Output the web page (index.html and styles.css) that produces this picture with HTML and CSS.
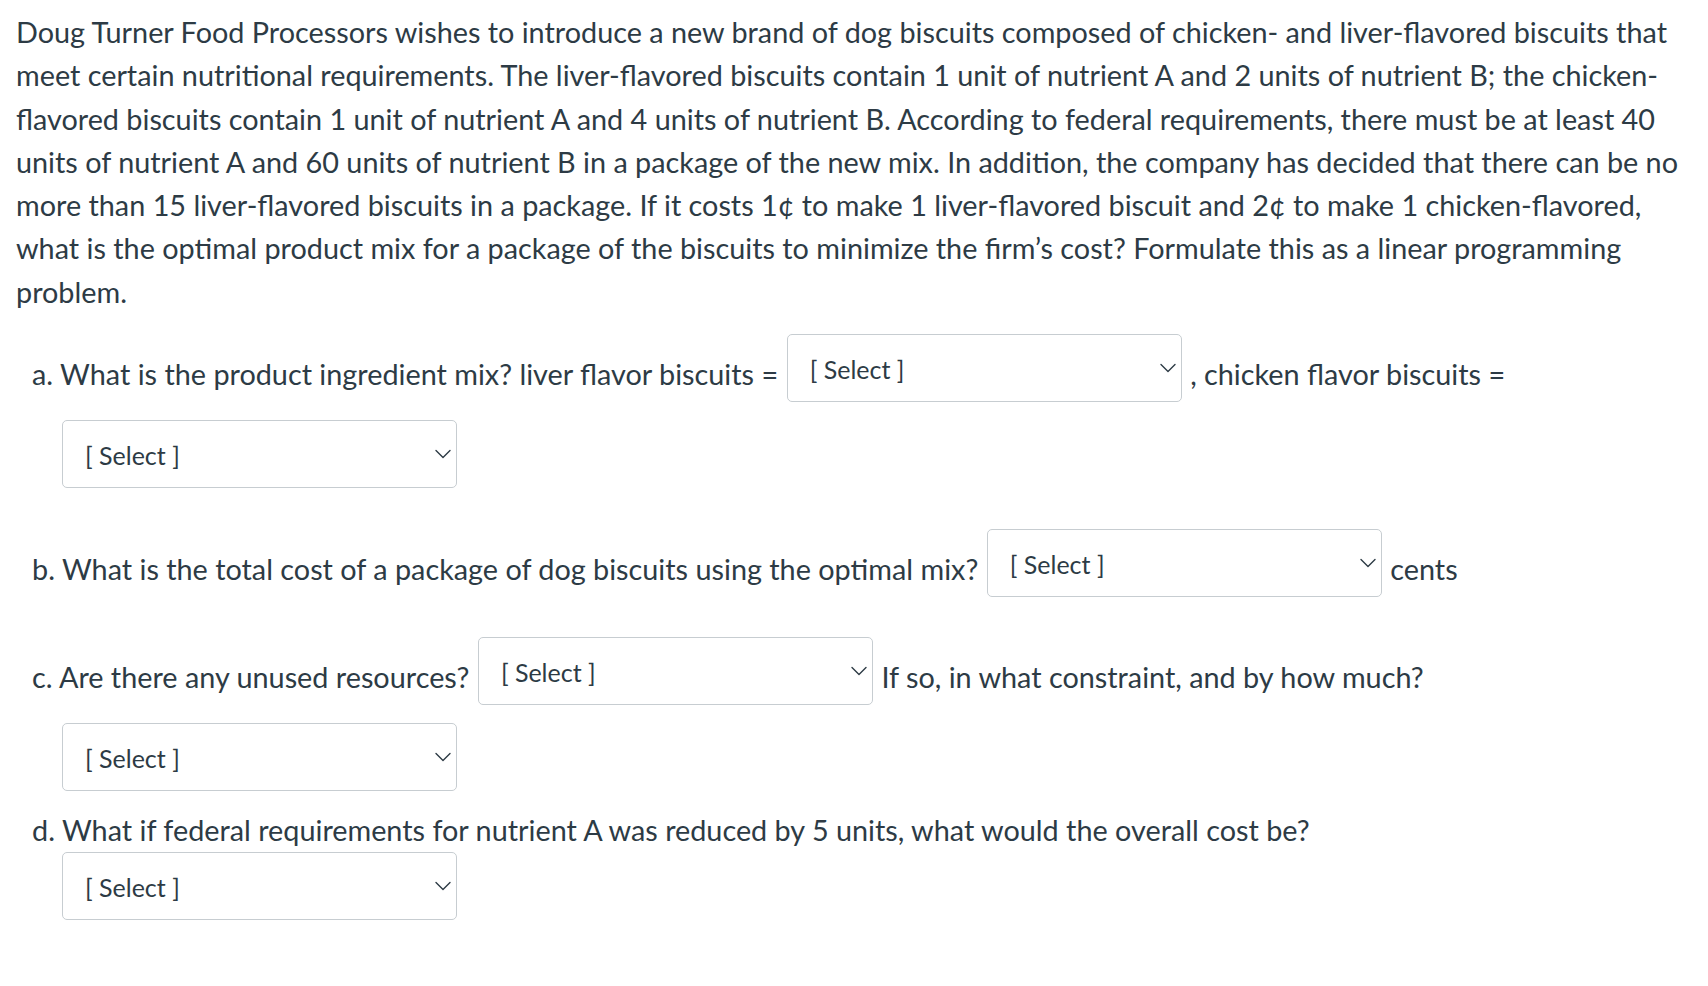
FILE: index.html
```html
<!DOCTYPE html>
<html lang="en">
<head>
<meta charset="utf-8">
<title>Doug Turner Food Processors</title>
<link rel="stylesheet" href="styles.css">
</head>
<body>
<div class="page">
  <p class="intro">Doug Turner Food Processors wishes to introduce a new brand of dog biscuits composed of chicken- and liver-flavored biscuits that meet certain nutritional requirements. The liver-flavored biscuits contain 1 unit of nutrient A and 2 units of nutrient B; the chicken-flavored biscuits contain 1 unit of nutrient A and 4 units of nutrient B. According to federal requirements, there must be at least 40 units of nutrient A and 60 units of nutrient B in a package of the new mix. In addition, the company has decided that there can be no more than 15 liver-flavored biscuits in a package. If it costs 1¢ to make 1 liver-flavored biscuit and 2¢ to make 1 chicken-flavored, what is the optimal product mix for a package of the biscuits to minimize the firm’s cost? Formulate this as a linear programming problem.</p>

  <div class="questions">
    <div class="row row-a">
      <span class="text">a. What is the product ingredient mix? liver flavor biscuits =</span>
      <span class="select-wrap">
        <select aria-label="liver flavor biscuits"><option>[ Select ]</option></select>
        <svg class="chev" width="16" height="10" viewBox="0 0 16 10"><path d="M1 1.5 L8 8.5 L15 1.5"/></svg>
      </span>
      <span class="text">, chicken flavor biscuits =</span>
    </div>
    <div class="answer answer-a2">
      <span class="select-wrap">
        <select aria-label="chicken flavor biscuits"><option>[ Select ]</option></select>
        <svg class="chev" width="16" height="10" viewBox="0 0 16 10"><path d="M1 1.5 L8 8.5 L15 1.5"/></svg>
      </span>
    </div>

    <div class="row row-b">
      <span class="text">b. What is the total cost of a package of dog biscuits using the optimal mix?</span>
      <span class="select-wrap">
        <select aria-label="total cost"><option>[ Select ]</option></select>
        <svg class="chev" width="16" height="10" viewBox="0 0 16 10"><path d="M1 1.5 L8 8.5 L15 1.5"/></svg>
      </span>
      <span class="text">cents</span>
    </div>

    <div class="row row-c">
      <span class="text">c. Are there any unused resources?</span>
      <span class="select-wrap">
        <select aria-label="unused resources"><option>[ Select ]</option></select>
        <svg class="chev" width="16" height="10" viewBox="0 0 16 10"><path d="M1 1.5 L8 8.5 L15 1.5"/></svg>
      </span>
      <span class="text">If so, in what constraint, and by how much?</span>
    </div>
    <div class="answer answer-c2">
      <span class="select-wrap">
        <select aria-label="constraint"><option>[ Select ]</option></select>
        <svg class="chev" width="16" height="10" viewBox="0 0 16 10"><path d="M1 1.5 L8 8.5 L15 1.5"/></svg>
      </span>
    </div>

    <div class="row row-d">
      <span class="text-plain">d. What if federal requirements for nutrient A was reduced by 5 units, what would the overall cost be?</span>
    </div>
    <div class="answer answer-d">
      <span class="select-wrap">
        <select aria-label="overall cost"><option>[ Select ]</option></select>
        <svg class="chev" width="16" height="10" viewBox="0 0 16 10"><path d="M1 1.5 L8 8.5 L15 1.5"/></svg>
      </span>
    </div>
  </div>
</div>
</body>
</html>
```

FILE: styles.css
```css
* {
  box-sizing: border-box;
}

html, body {
  margin: 0;
  background: #ffffff;
}

body {
  color: #2d3b45;
  font-family: Lato, "Noto Sans", "Liberation Sans", sans-serif;
  font-size: 28.8px;
  line-height: 43.3px;
}

.page {
  padding: 11px 18px 40px 16px;
}

.intro {
  margin: 0;
}

.questions {
  padding-left: 16px;
}

.row {
  display: flex;
  align-items: flex-start;
  gap: 8.5px;
  white-space: nowrap;
}

.row .text {
  padding-top: 18.8px;
}

.row-a {
  margin-top: 20px;
}

.row-b {
  margin-top: 41px;
}

.row-c {
  margin-top: 40px;
}

.row-d {
  margin-top: 18px;
}

.answer {
  padding-left: 30px;
}

.answer-a2,
.answer-c2 {
  margin-top: 18px;
}

.answer-d {
  margin-top: 0;
}

.select-wrap {
  position: relative;
  display: inline-block;
  flex: none;
  width: 395px;
  height: 68px;
  vertical-align: top;
}

.select-wrap select {
  -webkit-appearance: none;
  appearance: none;
  display: block;
  width: 100%;
  height: 100%;
  margin: 0;
  border: 1px solid #c7cdd1;
  border-radius: 5px;
  background: #ffffff;
  color: #2d3b45;
  font-family: inherit;
  font-size: 25px;
  line-height: 30px;
  padding: 1px 40px 0 22px;
}

.chev {
  position: absolute;
  right: 6px;
  top: 29px;
  pointer-events: none;
}

.chev path {
  fill: none;
  stroke: #2d3b45;
  stroke-width: 1.4;
  stroke-linecap: round;
  stroke-linejoin: round;
}
```
